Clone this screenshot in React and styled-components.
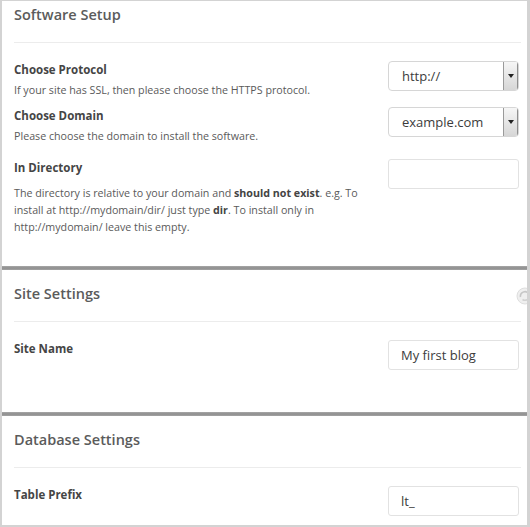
import styled, { createGlobalStyle } from "styled-components";

const GlobalStyle = createGlobalStyle`
	html, body {
		margin: 0;
		padding: 0;
		background: #ffffff;
	}
	* {
		box-sizing: border-box;
	}
`;

const Page = styled.div`
	width: 530px;
	height: 527px;
	overflow: hidden;
	background: #ffffff;
	border-style: solid;
	border-color: #d3d3d3;
	border-width: 1px 3px 2px 2px;
	font-family: "Open Sans", "Liberation Sans", sans-serif;
	display: flex;
	flex-direction: column;
`;

const Section = styled.section`
	position: relative;
	padding: 0 6px ${(p) => p.$bottom}px 12px;
	flex: ${(p) => (p.$grow ? 1 : "none")};
`;

const SectionBreak = styled.div`
	height: 4px;
	flex: none;
	background: linear-gradient(#a8a8a8, #8e8e8e 50%, #a4a4a4);
`;

const SectionHeader = styled.div`
	position: relative;
	padding-top: ${(p) => p.$top}px;
	padding-bottom: 17px;
	border-bottom: 1px solid #ececec;
`;

const SectionTitle = styled.h2`
	margin: 0;
	font-size: 14.5px;
	line-height: 20px;
	font-weight: 600;
	color: #5b5b5b;
`;

const Spinner = styled.svg`
	position: absolute;
	right: -13px;
	top: 17px;
	width: 18px;
	height: 18px;
`;

const Row = styled.div`
	display: flex;
	justify-content: space-between;
	align-items: flex-start;
	margin-top: ${(p) => p.$top}px;
`;

const Info = styled.div`
	width: 362px;
`;

const Label = styled.div`
	font-size: 11.5px;
	line-height: 18px;
	font-weight: 700;
	color: #454545;
`;

const Description = styled.p`
	margin: ${(p) => p.$top || 3}px 0 0;
	font-size: 10.7px;
	line-height: 17px;
	color: #5a5a5a;

	b {
		color: #444;
	}
`;

const SelectBox = styled.div`
	width: 131px;
	height: 30px;
	margin-right: 2px;
	display: flex;
	align-items: stretch;
	border: 1px solid #d6d6d6;
	border-radius: 4px;
	background: #fff;
	overflow: hidden;
`;

const SelectValue = styled.span`
	flex: 1;
	padding-left: 13px;
	font-size: 13px;
	line-height: 28px;
	color: #3c3c3c;
`;

const SelectArrow = styled.span`
	width: 15px;
	display: flex;
	align-items: center;
	justify-content: center;
	border-left: 1px solid #9a9a9a;
	border-right: 1px solid #8f8f8f;
	background: linear-gradient(#f6f6f6, #d6d6d6);

	&::after {
		content: "";
		border-left: 3px solid transparent;
		border-right: 3px solid transparent;
		border-top: 4px solid #222;
	}
`;

const TextInput = styled.div`
	width: 131px;
	height: 30px;
	margin-right: 2px;
	padding-left: 12px;
	border: 1px solid #e2e2e2;
	border-radius: 3px;
	font-size: 13px;
	line-height: 28px;
	color: #3c3c3c;
`;

const Select = ({ value }) => (
	<SelectBox>
		<SelectValue>{value}</SelectValue>
		<SelectArrow />
	</SelectBox>
);

const App = () => {
	return (
		<>
			<GlobalStyle />
			<Page>
				<Section $bottom={30}>
					<SectionHeader $top={4}>
						<SectionTitle>Software Setup</SectionTitle>
					</SectionHeader>
					<Row $top={18}>
						<Info>
							<Label>Choose Protocol</Label>
							<Description>If your site has SSL, then please choose the HTTPS protocol.</Description>
						</Info>
						<Select value="http://" />
					</Row>
					<Row $top={8}>
						<Info>
							<Label>Choose Domain</Label>
							<Description>Please choose the domain to install the software.</Description>
						</Info>
						<Select value="example.com" />
					</Row>
					<Row $top={14}>
						<Info>
							<Label>In Directory</Label>
							<Description $top={8}>
								The directory is relative to your domain and <b>should not exist</b>. e.g. To
								install at http://mydomain/dir/ just type <b>dir</b>. To install only in
								http://mydomain/ leave this empty.
							</Description>
						</Info>
						<TextInput />
					</Row>
				</Section>
				<SectionBreak />
				<Section $bottom={42}>
					<SectionHeader $top={14}>
						<SectionTitle>Site Settings</SectionTitle>
						<Spinner viewBox="0 0 18 18">
							<circle cx="9" cy="9" r="8" fill="#efefef" stroke="#dedede" strokeWidth="1" />
							<path d="M4.5 10a4.5 4.5 0 0 1 8-3.5" fill="none" stroke="#c6c6c6" strokeWidth="1.6" />
							<path d="M13.5 9a4.5 4.5 0 0 1-7 3.5" fill="none" stroke="#d2d2d2" strokeWidth="1.6" />
						</Spinner>
					</SectionHeader>
					<Row $top={18}>
						<Info>
							<Label>Site Name</Label>
						</Info>
						<TextInput>My first blog</TextInput>
					</Row>
				</Section>
				<SectionBreak />
				<Section $bottom={0} $grow>
					<SectionHeader $top={14}>
						<SectionTitle>Database Settings</SectionTitle>
					</SectionHeader>
					<Row $top={18}>
						<Info>
							<Label>Table Prefix</Label>
						</Info>
						<TextInput>lt_</TextInput>
					</Row>
				</Section>
			</Page>
		</>
	);
};

export default App;
